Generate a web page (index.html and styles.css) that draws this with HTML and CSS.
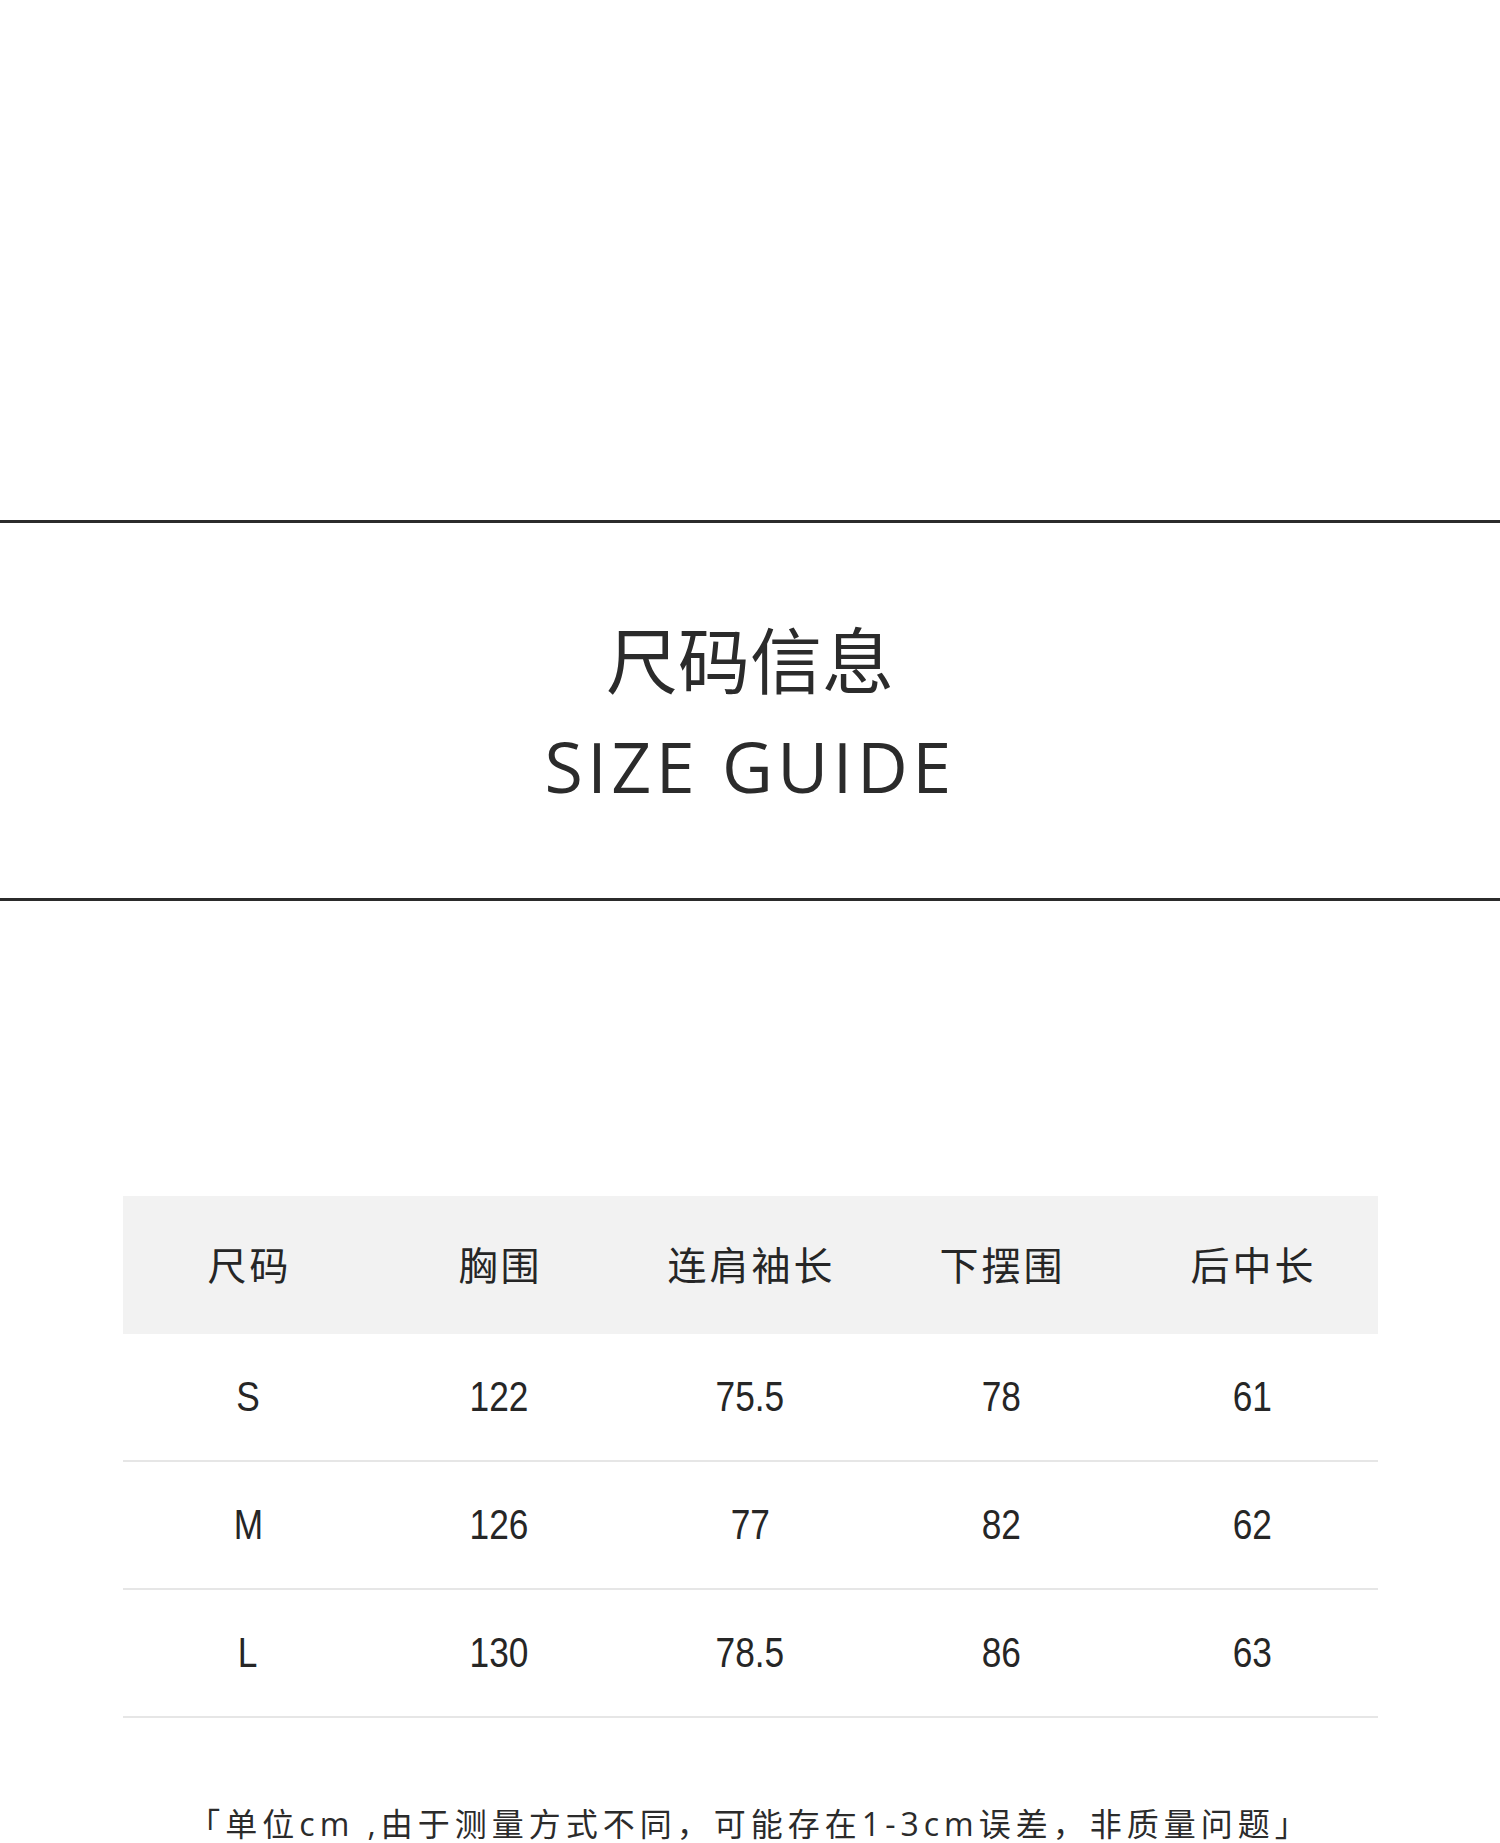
FILE: index.html
```html
<!DOCTYPE html>
<html lang="zh">
<head>
<meta charset="utf-8">
<title>尺码信息 SIZE GUIDE</title>
<link rel="stylesheet" href="styles.css">
</head>
<body>
<div class="page">
  <div class="top-space"></div>
  <section class="title-block">
    <h1 class="title-cn">尺码信息</h1>
    <div class="title-en">SIZE GUIDE</div>
  </section>
  <table class="size-table">
    <thead>
      <tr><th>尺码</th><th>胸围</th><th>连肩袖长</th><th>下摆围</th><th>后中长</th></tr>
    </thead>
    <tbody>
      <tr><td><span class="num">S</span></td><td><span class="num">122</span></td><td><span class="num">75.5</span></td><td><span class="num">78</span></td><td><span class="num">61</span></td></tr>
      <tr><td><span class="num">M</span></td><td><span class="num">126</span></td><td><span class="num">77</span></td><td><span class="num">82</span></td><td><span class="num">62</span></td></tr>
      <tr><td><span class="num">L</span></td><td><span class="num">130</span></td><td><span class="num">78.5</span></td><td><span class="num">86</span></td><td><span class="num">63</span></td></tr>
    </tbody>
  </table>
  <p class="note">「单位<span class="lat">cm ,</span>由于测量方式不同，可能存在<span class="lat">1-3cm</span>误差，非质量问题」</p>
</div>
</body>
</html>
```

FILE: styles.css
```css
html, body {
  margin: 0;
  padding: 0;
  background: #ffffff;
}
.page {
  width: 1500px;
  color: #2b2b2b;
  font-family: "Noto Sans CJK SC", "Noto Sans", sans-serif;
}
.top-space {
  height: 520px;
}
.title-block {
  border-top: 3px solid #2b2b2b;
  border-bottom: 3px solid #2b2b2b;
  padding: 98px 0 97px;
  display: flex;
  flex-direction: column;
  align-items: center;
}
.title-cn {
  margin: 0;
  font-size: 72px;
  line-height: 72px;
  font-weight: 400;
  font-family: "Noto Sans CJK SC", sans-serif;
}
.title-en {
  margin-top: 38px;
  font-size: 70px;
  line-height: 70px;
  font-weight: 400;
  letter-spacing: 4.5px;
  font-family: "Open Sans", "Noto Sans", sans-serif;
}
.size-table {
  margin: 295px auto 0;
  width: 1255px;
  border-collapse: collapse;
  table-layout: fixed;
}
.size-table th {
  height: 134px;
  padding: 0 0 4px 3px;
  background: #f2f2f2;
  font-size: 39px;
  line-height: 39px;
  font-weight: 400;
  letter-spacing: 3px;
  text-align: center;
  vertical-align: middle;
  font-family: "Noto Sans CJK SC", sans-serif;
  color: #262626;
}
.size-table td {
  height: 126px;
  padding: 0;
  border-bottom: 2px solid #e6e6e6;
  text-align: center;
  vertical-align: middle;
  font-size: 42px;
  line-height: 42px;
  font-family: "Liberation Sans", Arial, sans-serif;
  color: #262626;
}
.num {
  display: inline-block;
  transform: scaleX(0.84);
}
.note {
  margin: 88px 0 0;
  text-align: center;
  font-size: 32px;
  line-height: 32px;
  letter-spacing: 5px;
  font-family: "Noto Sans CJK SC", sans-serif;
}
.lat {
  font-family: "Open Sans", "Noto Sans", sans-serif;
}
```
